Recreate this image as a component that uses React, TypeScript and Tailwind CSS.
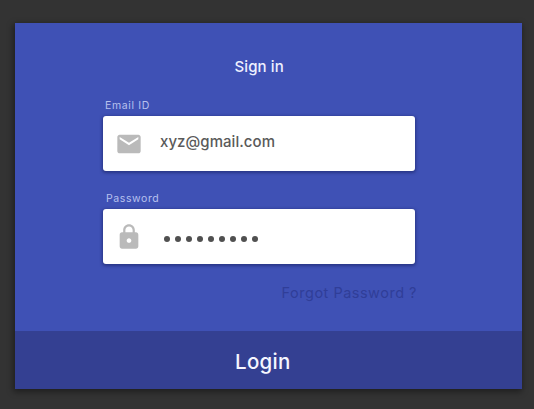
import type { ReactNode } from "react";

function MailIcon() {
  return (
    <svg viewBox="0 0 24 24" className="size-7 fill-[#bababa]">
      <path d="M20 4H4c-1.1 0-2 .9-2 2v12c0 1.1.9 2 2 2h16c1.1 0 2-.9 2-2V6c0-1.1-.9-2-2-2zm0 4l-8 5-8-5V6l8 5 8-5v2z" />
    </svg>
  );
}

function LockIcon() {
  return (
    <svg viewBox="0 0 24 24" className="size-7 fill-[#bababa]">
      <path d="M18 8h-1V6c0-2.76-2.24-5-5-5S7 3.24 7 6v2H6c-1.1 0-2 .9-2 2v10c0 1.1.9 2 2 2h12c1.1 0 2-.9 2-2V10c0-1.1-.9-2-2-2zm-6 9c-1.1 0-2-.9-2-2s.9-2 2-2 2 .9 2 2-.9 2-2 2zm3.1-9H8.9V6c0-1.71 1.39-3.1 3.1-3.1s3.1 1.39 3.1 3.1v2z" />
    </svg>
  );
}

function Field({ label, icon, children }: { label: ReactNode; icon: ReactNode; children: ReactNode }) {
  return (
    <div>
      <div className="h-[18px] pl-0.5 text-[10.5px] leading-4 text-[#b8c1ee]">{label}</div>
      <div className="flex h-[55px] items-center rounded-[3px] bg-white pl-3 shadow-[0_1px_3px_1px_rgba(20,28,90,0.5)]">
        {icon}
        {children}
      </div>
    </div>
  );
}

export default function App() {
  return (
    <main className="h-[409px] w-[534px] bg-[#333333] pt-[23px] pl-[15px] font-['Inter',sans-serif]">
      <section className="flex h-[366px] w-[507px] flex-col bg-[#3f51b5] shadow-[-1px_2px_6px_1px_rgba(0,0,0,0.4)]">
        <div className="flex-1 pt-8 pr-[107px] pl-[88px]">
          <h1 className="pl-[131.5px] text-[15px] leading-6 font-medium tracking-[0.1px] text-[#eef0ff]">Sign in</h1>
          <div className="mt-[19px] flex flex-col gap-5">
            <Field label={<span className="tracking-[0.65px]">Email ID</span>} icon={<MailIcon />}>
              <span className="mb-[3px] pl-[17px] text-[15px] font-medium tracking-[0.05px] text-[#5a5a5a]">xyz@gmail.com</span>
            </Field>
            <Field label={<span className="pl-px tracking-[0.6px]">Password</span>} icon={<LockIcon />}>
              <span className="mt-1 flex gap-[5px] pl-[21px]">
                {Array.from({ length: 9 }, (_, i) => (
                  <span key={i} className="size-1.5 rounded-full bg-[#505050]" />
                ))}
              </span>
            </Field>
          </div>
          <div className="mt-[17px] flex justify-end">
            <a className="-mr-0.5 text-[14.5px] leading-6 font-normal whitespace-nowrap tracking-[0.5px] text-[#303e98]">Forgot Password ?</a>
          </div>
        </div>
        <button className="h-[58px] bg-[#344092] pt-1 pl-[220px] text-left text-[20.5px] font-medium tracking-[0.3px] text-[#f5f6ff]">Login</button>
      </section>
    </main>
  );
}
